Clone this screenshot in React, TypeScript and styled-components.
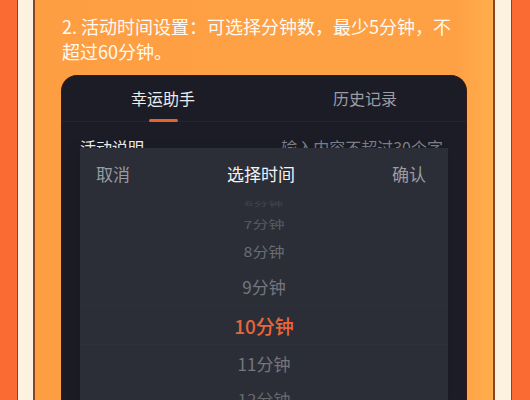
import styled, { createGlobalStyle } from "styled-components";

const GlobalStyle = createGlobalStyle`
  html, body { margin: 0; padding: 0; background: #fa6b34; }
  body { font-family: "Noto Sans CJK SC", "Noto Sans", sans-serif; }
  * { box-sizing: border-box; }
`;

const Page = styled.div`
  width: 530px;
  height: 400px;
  overflow: hidden;
  display: flex;
  padding: 0 18px 0 17px;
  background: #fa6b34;
`;

const Frame = styled.div`
  flex: 1;
  display: flex;
  padding: 0 16px 0 15px;
  background: #fdf1e0;
  border-left: 1px solid #8a4527;
  border-right: 1px solid #8a4527;
`;

const Panel = styled.div`
  flex: 1;
  display: flex;
  flex-direction: column;
  padding: 14px 26px 0 26px;
  background: linear-gradient(to right, #fd9e42 0%, #fea144 92%, #ffad4e 100%);
  border-left: 2px solid #8a4527;
  border-right: 2px solid #8a4527;
`;

const Heading = styled.p`
  margin: 0 0 11px;
  padding-left: 1px;
  color: #fffaf2;
  font-size: 18px;
  line-height: 25px;
  white-space: nowrap;
`;

const Card = styled.div`
  position: relative;
  flex: 1;
  background: #1b1c25;
  border: 1px solid #3a1a10;
  border-bottom: none;
  border-radius: 16px 16px 0 0;
`;

const Tabs = styled.div`
  display: grid;
  grid-template-columns: 1fr 1fr;
  height: 46px;
  border-bottom: 1px solid #24262f;
`;

const Tab = styled.div<{ $active?: boolean }>`
  display: flex;
  flex-direction: column;
  align-items: center;
  padding-top: 10px;
  font-size: 16px;
  line-height: 24px;
  color: ${({ $active }) => ($active ? "#ececee" : "#9c9da5")};
`;

const Underline = styled.span`
  display: block;
  width: 29px;
  height: 3px;
  margin-top: 9px;
  border-radius: 2px;
  background: #e8622f;
`;

const FieldRow = styled.div`
  display: flex;
  justify-content: space-between;
  padding: 14px 23px 0 18px;
  font-size: 16px;
  line-height: 22px;
`;

const FieldLabel = styled.span`
  color: #ededf0;
`;

const FieldHint = styled.span`
  color: #7d7f87;
`;

const Sheet = styled.div`
  position: absolute;
  top: 72px;
  left: 18px;
  right: 18px;
  bottom: 0;
  background: #2c2e37;
  box-shadow: -6px 0 10px rgba(0, 0, 0, 0.08);
`;

const SheetHeader = styled.div`
  display: flex;
  align-items: center;
  justify-content: space-between;
  height: 46px;
  padding: 4px 22px 0 16px;
  font-size: 17px;
`;

const HeaderAction = styled.span`
  color: #9a9ca3;
`;

const HeaderTitle = styled.span`
  color: #f2f2f4;
`;

const Wheel = styled.div`
  display: flex;
  flex-direction: column;
`;

const Option = styled.div<{ $h: number; $size: number; $color: string; $squash?: number; $selected?: boolean }>`
  display: flex;
  align-items: center;
  justify-content: center;
  height: ${({ $h }) => $h}px;
  font-size: ${({ $size }) => $size}px;
  color: ${({ $color }) => $color};
  font-weight: ${({ $selected }) => ($selected ? 500 : 400)};
  border-top: ${({ $selected }) => ($selected ? "1px solid rgba(255,255,255,0.015)" : "none")};
  border-bottom: ${({ $selected }) => ($selected ? "1px solid rgba(255,255,255,0.015)" : "none")};

  span {
    display: inline-block;
    transform: scaleY(${({ $squash }) => $squash ?? 1});
  }
`;

const options = [
  { label: "6分钟", h: 18, size: 15, color: "#43454e", squash: 0.4 },
  { label: "7分钟", h: 23, size: 16, color: "#595b63", squash: 0.68 },
  { label: "8分钟", h: 32, size: 16, color: "#6a6c74", squash: 0.85 },
  { label: "9分钟", h: 38, size: 17, color: "#74767e" },
  { label: "10分钟", h: 40, size: 19, color: "#e8663a", selected: true },
  { label: "11分钟", h: 36, size: 17, color: "#74767e" },
  { label: "12分钟", h: 34, size: 17, color: "#686a72", squash: 0.85 },
];

export default function App() {
  return (
    <>
      <GlobalStyle />
      <Page>
        <Frame>
          <Panel>
            <Heading>
              2. 活动时间设置：可选择分钟数，最少5分钟，不
              <br />
              超过60分钟。
            </Heading>
            <Card>
              <Tabs>
                <Tab $active>
                  幸运助手
                  <Underline />
                </Tab>
                <Tab>历史记录</Tab>
              </Tabs>
              <FieldRow>
                <FieldLabel>活动说明</FieldLabel>
                <FieldHint>输入内容不超过30个字</FieldHint>
              </FieldRow>
              <Sheet>
                <SheetHeader>
                  <HeaderAction>取消</HeaderAction>
                  <HeaderTitle>选择时间</HeaderTitle>
                  <HeaderAction>确认</HeaderAction>
                </SheetHeader>
                <Wheel>
                  {options.map((o) => (
                    <Option
                      key={o.label}
                      $h={o.h}
                      $size={o.size}
                      $color={o.color}
                      $squash={o.squash}
                      $selected={o.selected}
                    >
                      <span>{o.label}</span>
                    </Option>
                  ))}
                </Wheel>
              </Sheet>
            </Card>
          </Panel>
        </Frame>
      </Page>
    </>
  );
}
